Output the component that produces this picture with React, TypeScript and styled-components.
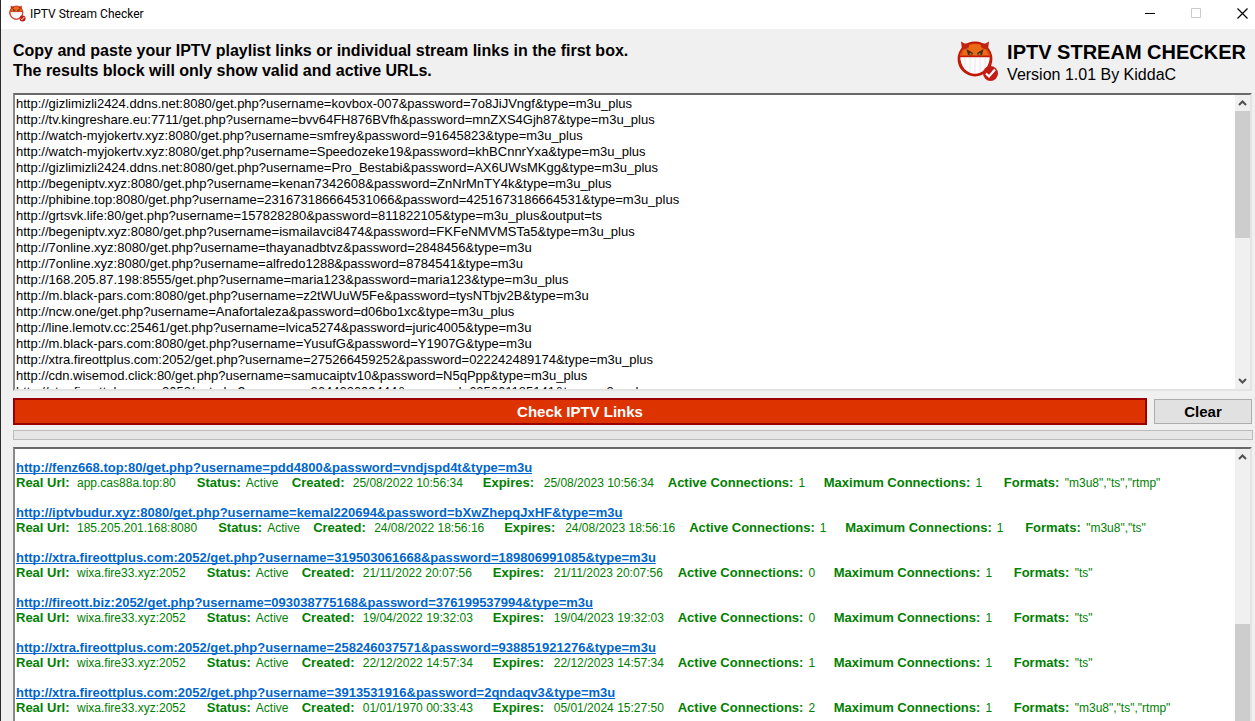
import React from 'react';
import styled, { createGlobalStyle, css } from 'styled-components';

const GlobalStyle = createGlobalStyle`
  *, *::before, *::after { box-sizing: border-box; }
  body {
    margin: 0;
    background: #f0f0f0;
    color: #000;
    font-family: 'Liberation Sans', Arial, sans-serif;
  }
  button, textarea { font-family: inherit; color: inherit; margin: 0; }
`;

const Window = styled.div`
  display: flex;
  flex-direction: column;
  height: 100vh;
  overflow: hidden;
  border-left: 1px solid #2b2b2b;
  background: #f0f0f0;
`;

const TitleBar = styled.header`
  display: flex;
  align-items: center;
  flex: none;
  height: 29px;
  padding: 0 0 2px 8px;
  background: #fff;
`;

const WindowTitle = styled.span`
  margin-left: 4px;
  font-family: Roboto, sans-serif;
  font-size: 12px;
  line-height: 16px;
`;

const WindowControls = styled.div`
  display: flex;
  margin-left: auto;
  margin-right: -10px;
`;

const WindowButton = styled.button`
  display: flex;
  align-items: center;
  justify-content: center;
  width: 46px;
  height: 26px;
  padding: 0;
  border: 0;
  background: none;
`;

const Intro = styled.div`
  display: flex;
  justify-content: space-between;
  flex: none;
  padding: 11px 9px 0 12px;
`;

const Instructions = styled.p`
  margin: 0;
  padding: 1px 0 12px;
  font-size: 16px;
  font-weight: 700;
  line-height: 20px;
`;

const Brand = styled.div`
  display: flex;
  gap: 8px;
`;

const BrandName = styled.h1`
  margin: 0;
  font-size: 20px;
  line-height: 24px;
`;

const Version = styled.p`
  margin: 0;
  font-size: 16px;
  line-height: 22px;
`;

const Panel = styled.section<{ $fill?: boolean }>`
  display: flex;
  flex: ${p => (p.$fill ? '1 1 0' : '0 0 298px')};
  min-height: 0;
  margin: 0 3px 0 12px;
  overflow: hidden;
  border: 2px solid;
  border-color: #696969 #e3e3e3 #e3e3e3 #8a8a8a;
  border-bottom-width: ${p => (p.$fill ? 0 : 2)}px;
  background: #fff;
`;

const LinkInput = styled.textarea`
  flex: 1;
  min-width: 0;
  padding: 1px 1px 0;
  border: 0;
  outline: 0;
  resize: none;
  overflow: hidden;
  background: transparent;
  font-size: 13px;
  line-height: 16px;
  white-space: pre;
`;

const Track = styled.div`
  display: flex;
  flex-direction: column;
  flex: none;
  width: 15px;
  background: #f0f0f0;
`;

const ArrowButton = styled.button<{ $end?: boolean }>`
  display: flex;
  align-items: center;
  justify-content: center;
  flex: none;
  height: 16px;
  margin-top: ${p => (p.$end ? 'auto' : 0)};
  padding: 0;
  border: 0;
  background: none;
`;

const Thumb = styled.div<{ $offset: number; $length?: number }>`
  margin-top: ${p => p.$offset}px;
  ${p => (p.$length ? css`height: ${p.$length}px;` : css`flex: 1;`)}
  background: #cdcdcd;
`;

const Actions = styled.div`
  display: flex;
  align-items: center;
  gap: 7px;
  flex: none;
  margin: 7px 3px 5px 12px;
`;

const ActionButton = styled.button<{ $primary?: boolean }>`
  padding: 0;
  font-size: 15px;
  font-weight: 700;
  ${p =>
    p.$primary
      ? css`
          flex: 1;
          height: 27px;
          border: 2px solid #9b0000;
          background: #dd3300;
          color: #fff;
        `
      : css`
          width: 98px;
          height: 25px;
          border: 1px solid #adadad;
          background: #e1e1e1;
        `}
`;

const Progress = styled.progress`
  display: block;
  flex: none;
  appearance: none;
  width: auto;
  height: 10px;
  margin: 0 2px 7px 12px;
  border: 1px solid #bcbcbc;
  background: #e6e6e6;
  &::-webkit-progress-bar { background: #e6e6e6; }
`;

const Results = styled.ul`
  flex: 1;
  min-width: 0;
  margin: 0;
  padding: 11px 1px 0;
  overflow: hidden;
  list-style: none;
  font-size: 13px;
  line-height: 15px;
  color: #008000;
  white-space: nowrap;
`;

const Result = styled.li`
  margin-bottom: 15px;
`;

const StreamLink = styled.a`
  display: block;
  color: #0066cc;
  font-weight: 700;
  text-decoration: underline;
  text-decoration-skip-ink: none;
`;

const Details = styled.div`
  display: flex;
  height: 15px;
`;

const DetailItem = styled.span<{ $width?: number }>`
  display: flex;
  align-items: baseline;
  gap: 5px;
  flex: none;
  font-size: 12px;
  ${p => (p.$width ? css`width: ${p.$width}px;` : css`padding-right: 21px;`)}
`;

const DetailLabel = styled.b`
  min-width: 56px;
  font-size: 13px;

  ${DetailItem}:nth-child(2) > & { min-width: 0; }
`;

const playlist = [
  'http://gizlimizli2424.ddns.net:8080/get.php?username=kovbox-007&password=7o8JiJVngf&type=m3u_plus',
  'http://tv.kingreshare.eu:7711/get.php?username=bvv64FH876BVfh&password=mnZXS4Gjh87&type=m3u_plus',
  'http://watch-myjokertv.xyz:8080/get.php?username=smfrey&password=91645823&type=m3u_plus',
  'http://watch-myjokertv.xyz:8080/get.php?username=Speedozeke19&password=khBCnnrYxa&type=m3u_plus',
  'http://gizlimizli2424.ddns.net:8080/get.php?username=Pro_Bestabi&password=AX6UWsMKgg&type=m3u_plus',
  'http://begeniptv.xyz:8080/get.php?username=kenan7342608&password=ZnNrMnTY4k&type=m3u_plus',
  'http://phibine.top:8080/get.php?username=231673186664531066&password=4251673186664531&type=m3u_plus',
  'http://grtsvk.life:80/get.php?username=157828280&password=811822105&type=m3u_plus&output=ts',
  'http://begeniptv.xyz:8080/get.php?username=ismailavci8474&password=FKFeNMVMSTa5&type=m3u_plus',
  'http://7online.xyz:8080/get.php?username=thayanadbtvz&password=2848456&type=m3u',
  'http://7online.xyz:8080/get.php?username=alfredo1288&password=8784541&type=m3u',
  'http://168.205.87.198:8555/get.php?username=maria123&password=maria123&type=m3u_plus',
  'http://m.black-pars.com:8080/get.php?username=z2tWUuW5Fe&password=tysNTbjv2B&type=m3u',
  'http://ncw.one/get.php?username=Anafortaleza&password=d06bo1xc&type=m3u_plus',
  'http://line.lemotv.cc:25461/get.php?username=lvica5274&password=juric4005&type=m3u',
  'http://m.black-pars.com:8080/get.php?username=YusufG&password=Y1907G&type=m3u',
  'http://xtra.fireottplus.com:2052/get.php?username=275266459252&password=022242489174&type=m3u_plus',
  'http://cdn.wisemod.click:80/get.php?username=samucaiptv10&password=N5qPpp&type=m3u_plus',
  'http://xtra.fireottplus.com:2052/get.php?username=264423609444&password=635661185141&type=m3u_plus',
].join('\n');

const results = [
  { link: 'http://fenz668.top:80/get.php?username=pdd4800&password=vndjspd4t&type=m3u', url: 'app.cas88a.top:80', created: '25/08/2022 10:56:34', expires: '25/08/2023 10:56:34', active: 1, formats: '"m3u8","ts","rtmp"' },
  { link: 'http://iptvbudur.xyz:8080/get.php?username=kemal220694&password=bXwZhepqJxHF&type=m3u', url: '185.205.201.168:8080', created: '24/08/2022 18:56:16', expires: '24/08/2023 18:56:16', active: 1, formats: '"m3u8","ts"' },
  { link: 'http://xtra.fireottplus.com:2052/get.php?username=319503061668&password=189806991085&type=m3u', url: 'wixa.fire33.xyz:2052', created: '21/11/2022 20:07:56', expires: '21/11/2023 20:07:56', active: 0, formats: '"ts"' },
  { link: 'http://fireott.biz:2052/get.php?username=093038775168&password=376199537994&type=m3u', url: 'wixa.fire33.xyz:2052', created: '19/04/2022 19:32:03', expires: '19/04/2023 19:32:03', active: 0, formats: '"ts"' },
  { link: 'http://xtra.fireottplus.com:2052/get.php?username=258246037571&password=938851921276&type=m3u', url: 'wixa.fire33.xyz:2052', created: '22/12/2022 14:57:34', expires: '22/12/2023 14:57:34', active: 1, formats: '"ts"' },
  { link: 'http://xtra.fireottplus.com:2052/get.php?username=3913531916&password=2qndaqv3&type=m3u', url: 'wixa.fire33.xyz:2052', created: '01/01/1970 00:33:43', expires: '05/01/2024 15:27:50', active: 2, formats: '"m3u8","ts","rtmp"' },
];

function Detail({ label, value, width }: { label: string; value: string | number; width?: number }) {
  return (
    <DetailItem $width={width}>
      <DetailLabel>{label}:</DetailLabel>
      <span>{value}</span>
    </DetailItem>
  );
}

function DevilLogo({ size }: { size: number }) {
  return (
    <svg width={size} height={size} viewBox="0 0 42 42" aria-hidden="true">
      <circle cx="18" cy="19" r="16.500" fill="#e2500e" stroke="#c01808" strokeWidth="1.800" />
      <path d="M8 8Q12 4 18 4Q24 4 28 8Q30 11 31 15H5Q6 11 8 8Z" fill="#ea6a18" />
      <path d="M4 1.500 7.500 3.500 12 3.500 12 7 9 9 5 9.500Z M32 1.500 28.500 3.500 24 3.500 24 7 27 9 31 9.500Z" fill="#c22412" />
      <path d="M9.500 9 16 13 15 15.500 11 15Z M26.500 9 20 13 21 15.500 25 15Z" fill="#4a2a14" />
      <path d="M12.500 14h2M21.500 14h2" stroke="#e8c050" />
      <path d="M2.500 16.500H33.500Q33.500 24 29 29.500Q24 34.500 18 34.500Q12 34.500 7 29.500Q2.500 24 2.500 16.500Z" fill="#fff" stroke="#c41a08" strokeWidth="1.500" />
      <path d="M8 18V28M13 18V32M18 18V33M23 18V32M28 18V28" stroke="#e6e3e9" />
      <circle cx="33.500" cy="33.500" r="7.500" fill="#c41c14" />
      <path d="M29 33.500 32 36.500 38 29.500" fill="none" stroke="#fff" strokeWidth="2.200" />
    </svg>
  );
}

function Arrow({ down }: { down?: boolean }) {
  return (
    <svg width="9" height="6" viewBox="0 0 9 6" aria-hidden="true">
      <path d={down ? 'M1 1 4.500 4.500 8 1' : 'M1 5 4.500 1.500 8 5'} fill="none" stroke="#505050" strokeWidth="2" />
    </svg>
  );
}

export default function App() {
  return (
    <>
      <GlobalStyle />
      <Window>
        <TitleBar>
          <DevilLogo size={17} />
          <WindowTitle>IPTV Stream Checker</WindowTitle>
          <WindowControls>
            <WindowButton aria-label="Minimize">
              <svg width="11" height="11"><path d="M0 5.500H10" stroke="#000" /></svg>
            </WindowButton>
            <WindowButton aria-label="Maximize" disabled>
              <svg width="11" height="11"><path d="M.5 .5H9.500V9.500H.5Z" fill="none" stroke="#ccc" /></svg>
            </WindowButton>
            <WindowButton aria-label="Close">
              <svg width="11" height="11"><path d="M.5 .5 10.500 10.500M10.500 .5 .5 10.500" stroke="#000" strokeWidth="1.200" /></svg>
            </WindowButton>
          </WindowControls>
        </TitleBar>

        <Intro>
          <Instructions>
            Copy and paste your IPTV playlist links or individual stream links in the first box.
            <br />
            The results block will only show valid and active URLs.
          </Instructions>
          <Brand>
            <DevilLogo size={42} />
            <div>
              <BrandName>IPTV STREAM CHECKER</BrandName>
              <Version>Version 1.01 By KiddaC</Version>
            </div>
          </Brand>
        </Intro>

        <Panel>
          <LinkInput aria-label="Playlist or stream links" defaultValue={playlist} spellCheck={false} wrap="off" />
          <Track>
            <ArrowButton aria-label="Scroll up"><Arrow /></ArrowButton>
            <Thumb $offset={0} $length={127} />
            <ArrowButton $end aria-label="Scroll down"><Arrow down /></ArrowButton>
          </Track>
        </Panel>

        <Actions>
          <ActionButton $primary>Check IPTV Links</ActionButton>
          <ActionButton>Clear</ActionButton>
        </Actions>
        <Progress value={0} max={100} aria-label="Check progress" />

        <Panel $fill>
          <Results>
            {results.map(r => (
              <Result key={r.link}>
                <StreamLink href={r.link}>{r.link}</StreamLink>
                <Details>
                  <Detail label="Real Url" value={r.url} />
                  <Detail label="Status" value="Active" width={95} />
                  <Detail label="Created" value={r.created} width={191} />
                  <Detail label="Expires" value={r.expires} width={185} />
                  <Detail label="Active Connections" value={r.active} width={156} />
                  <Detail label="Maximum Connections" value={1} width={180} />
                  <Detail label="Formats" value={r.formats} />
                </Details>
              </Result>
            ))}
          </Results>
          <Track>
            <ArrowButton aria-label="Scroll up"><Arrow /></ArrowButton>
            <Thumb $offset={159} />
          </Track>
        </Panel>
      </Window>
    </>
  );
}
